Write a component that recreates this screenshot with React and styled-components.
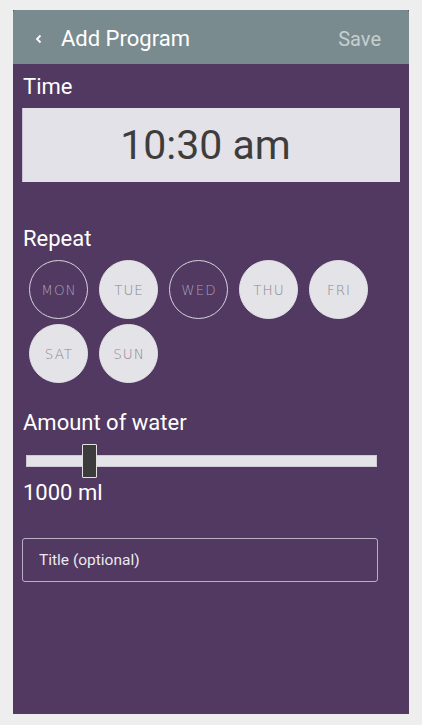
import React, { useState } from "react";
import styled, { createGlobalStyle } from "styled-components";

const Global = createGlobalStyle`
  html, body { margin: 0; padding: 0; background: #eeeeee; }
  body { font-family: Roboto, "Liberation Sans", sans-serif; }
  * { box-sizing: border-box; }
`;

const Screen = styled.div`
  margin: 10px 0 0 13px;
  width: 396px;
  height: 704px;
  background: #513961;
  display: flex;
  flex-direction: column;
`;

const Header = styled.header`
  height: 54px;
  background: #7a8b8f;
  border-radius: 2px 2px 0 0;
  display: flex;
  align-items: center;
  padding: 3px 28px 0 20px;
`;

const BackButton = styled.button`
  background: none;
  border: none;
  padding: 0;
  width: 10px;
  height: 12px;
  display: flex;
  align-items: center;
  justify-content: center;
  margin-right: 18px;
  color: #ffffff;
`;

const Title = styled.h1`
  margin: 0;
  flex: 1;
  font-size: 22px;
  font-weight: 400;
  color: #ffffff;
  line-height: 26px;
`;

const Save = styled.button`
  background: none;
  border: none;
  padding: 0;
  font-family: Roboto, "Liberation Sans", sans-serif;
  font-size: 20px;
  color: #c6ced0;
`;

const Body = styled.div`
  padding: 10px 9px 0 9px;
  display: flex;
  flex-direction: column;
`;

const Label = styled.div`
  font-size: 22px;
  line-height: 26px;
  color: #ffffff;
  margin-top: ${(p) => p.$top || 0}px;
  padding-left: 1px;
`;

const TimeBox = styled.div`
  margin-top: 8px;
  height: 74px;
  background: #e3e2e8;
  border-left: 1px solid #c9c2d3;
  display: flex;
  align-items: center;
  justify-content: center;
  padding-right: 12px;
  font-size: 41px;
  color: #3d3d3d;
`;

const Days = styled.div`
  margin-top: 8px;
  padding-left: 7px;
  display: flex;
  flex-wrap: wrap;
  column-gap: 11px;
  row-gap: 5px;
  width: 380px;
`;

const Day = styled.button`
  width: 59px;
  height: 59px;
  border-radius: 50%;
  padding: 0 0 0 1px;
  display: flex;
  align-items: center;
  justify-content: center;
  font-family: "DejaVu Sans", Lato, sans-serif;
  font-weight: 200;
  font-size: 13.5px;
  letter-spacing: 1px;
  background: ${(p) => (p.$on ? "#e4e3e8" : "transparent")};
  border: 1.5px solid ${(p) => (p.$on ? "#e4e3e8" : "#d9d3df")};
  color: ${(p) => (p.$on ? "#8a888e" : "#a99db6")};
`;

const SliderWrap = styled.div`
  margin-top: 8px;
  margin-left: 4px;
  width: 351px;
  height: 34px;
  position: relative;
  display: flex;
  align-items: center;
`;

const Track = styled.div`
  width: 100%;
  height: 12px;
  background: #e4e3e8;
  border: 1px solid #cfc9d6;
`;

const Thumb = styled.div`
  position: absolute;
  top: 0;
  width: 15px;
  height: 34px;
  background: #3c3c3c;
  border: 1px solid #e2e2e2;
  border-radius: 1px;
`;

const Input = styled.input`
  margin-top: 32px;
  width: 356px;
  height: 44px;
  background: transparent;
  border: 1.5px solid #b9b0c6;
  border-radius: 3px;
  padding: 0 16px;
  font-family: Roboto, "Liberation Sans", sans-serif;
  font-size: 15.5px;
  color: #ece8f0;
  outline: none;
  &::placeholder { color: #ece8f0; }
`;

const days = [
  ["MON", false],
  ["TUE", true],
  ["WED", false],
  ["THU", true],
  ["FRI", true],
  ["SAT", true],
  ["SUN", true],
];

export default function App() {
  const [sel] = useState(days);
  const pos = 56;
  return (
    <>
      <Global />
      <Screen>
        <Header>
          <BackButton aria-label="Back">
            <svg width="7" height="10" viewBox="0 0 7 10">
              <polyline points="5.5,1.5 2,5 5.5,8.5" fill="none" stroke="#fff" strokeWidth="1.8" />
            </svg>
          </BackButton>
          <Title>Add Program</Title>
          <Save>Save</Save>
        </Header>
        <Body>
          <Label>Time</Label>
          <TimeBox>10:30 am</TimeBox>
          <Label $top={44}>Repeat</Label>
          <Days>
            {sel.map(([d, on]) => (
              <Day key={d} $on={on}>{d}</Day>
            ))}
          </Days>
          <Label $top={27}>Amount of water</Label>
          <SliderWrap>
            <Track />
            <Thumb style={{ left: pos }} />
          </SliderWrap>
          <Label $top={2}>1000 ml</Label>
          <Input placeholder="Title (optional)" />
        </Body>
      </Screen>
    </>
  );
}
